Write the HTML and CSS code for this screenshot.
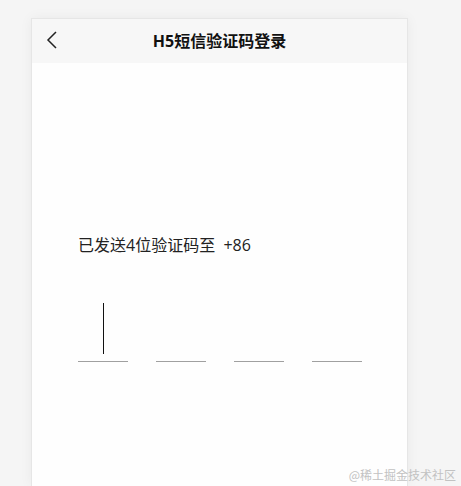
FILE: index.html
```html
<!DOCTYPE html>
<html lang="zh">
<head>
<meta charset="utf-8">
<title>H5短信验证码登录</title>
<link rel="stylesheet" href="styles.css">
</head>
<body>
<div class="card">
  <header class="navbar">
    <span class="back">
      <svg width="12" height="18" viewBox="0 0 12 18"><path d="M10 1 L2 9 L10 17" fill="none" stroke="#222" stroke-width="1.5"/></svg>
    </span>
    <h1 class="title">H5短信验证码登录</h1>
  </header>
  <main class="content">
    <p class="tip">已发送4位验证码至&nbsp; +86</p>
    <div class="codes">
      <div class="code active"><span class="cursor"></span></div>
      <div class="code"></div>
      <div class="code"></div>
      <div class="code"></div>
    </div>
  </main>
</div>
<div class="watermark">@稀土掘金技术社区</div>
</body>
</html>
```
FILE: styles.css
```css
html, body {
  margin: 0;
  padding: 0;
  height: 100%;
  background: #f5f5f5;
  font-family: "Open Sans", "Noto Sans CJK SC", sans-serif;
  overflow: hidden;
}
body {
  padding: 18px 0 0 31px;
  box-sizing: border-box;
}
.card {
  width: 377px;
  height: 100%;
  box-sizing: border-box;
  border: 1px solid #e6e6e6;
  border-bottom: none;
  background: #fefefe;
  box-shadow: 0 0 12px rgba(0,0,0,0.05);
  display: flex;
  flex-direction: column;
}
.navbar {
  height: 44px;
  background: #f7f7f7;
  display: flex;
  align-items: center;
  justify-content: center;
  position: relative;
}
.back {
  position: absolute;
  left: 14px;
  top: 12px;
  display: flex;
}
.title {
  margin: 0;
  font-size: 16px;
  font-weight: 700;
  color: #111;
  line-height: 22px;
}
.content {
  padding: 172px 0 0 46px;
}
.tip {
  margin: 0;
  font-size: 16px;
  line-height: 20px;
  color: #222;
}
.codes {
  margin-top: 47px;
  display: flex;
  gap: 28px;
}
.code {
  width: 50px;
  height: 59px;
  border-bottom: 1px solid #a0a0a0;
  display: flex;
  justify-content: center;
}
.cursor {
  width: 1px;
  height: 51px;
  margin-top: 1px;
  background: #111;
}
.watermark {
  position: absolute;
  right: 5px;
  bottom: 3px;
  font-size: 12px;
  color: #c2c2c2;
  font-family: "Noto Sans CJK SC", serif;
  line-height: 16px;
}
```
